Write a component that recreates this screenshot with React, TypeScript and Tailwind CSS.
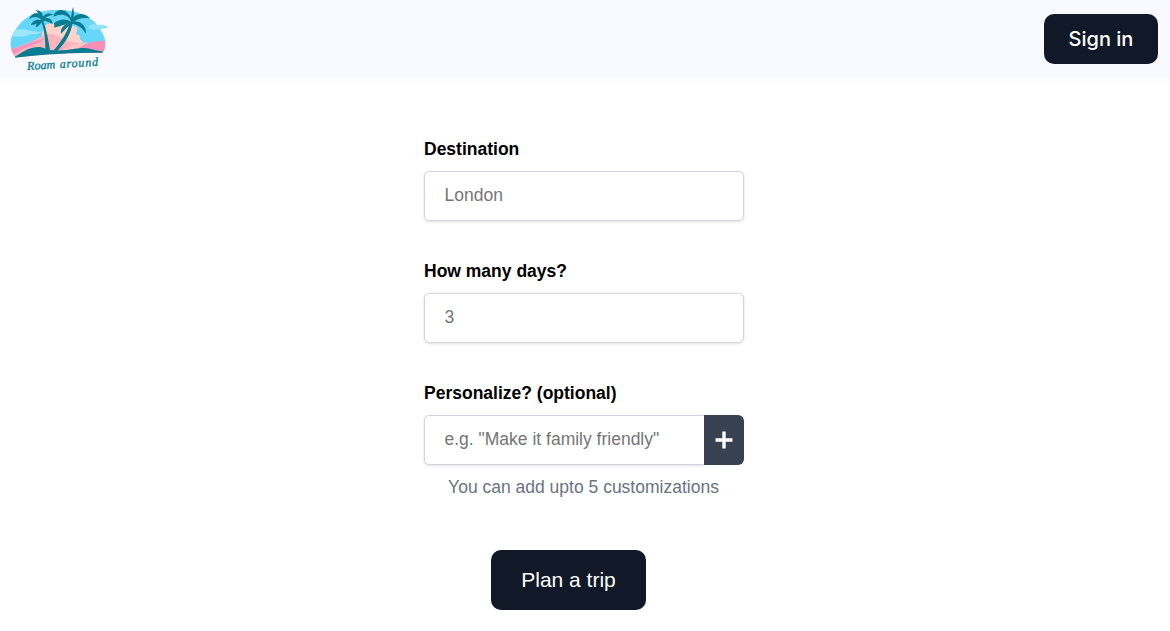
import React from "react";

function Logo() {
  return (
    <svg viewBox="0 0 360 240" className="h-20 w-[120px]" role="img" aria-label="Roam around">
      <defs>
        <clipPath id="island">
          <path d="M46 173 C38 160 31 146 31 133 C32 112 38 99 53 80 C78 44 122 29 173 29 C228 29 282 48 305 95 C313 107 317 121 316 134 C315 144 312 153 307 158 C215 158 128 162 46 173Z" />
        </clipPath>
      </defs>
      <g clipPath="url(#island)">
        <rect x="25" y="20" width="300" height="160" fill="#68d5fa" />
        <path d="M28 98 C45 84 62 91 76 88 C91 97 108 91 124 98 C105 104 91 101 78 107 C62 113 48 107 28 112Z" fill="#9ee6fb" />
        <path d="M126 110 C124 93 135 84 134 75 L160 68 L229 80 C237 90 226 96 230 104 C238 104 243 108 239 118 L250 126 L200 160 L110 160Z" fill="#fdd3ca" />
        <path d="M34 148 C65 136 104 124 130 105 C160 96 170 108 190 116 C211 128 230 126 248 133 L248 166 L42 173Z" fill="#fdb4bc" />
        <path d="M33 148 C72 139 99 121 134 117 C119 128 103 132 86 140 C69 144 53 156 40 165Z" fill="#fa8fba" />
        <path d="M179 147 C210 128 249 140 270 128 C287 121 304 127 318 121 L318 162 L165 162Z" fill="#fa8fb6" />
        <path d="M176 153 C210 132 242 131 267 126 L235 145Z" fill="#fdc5c3" />
        <path d="M44 171 C74 151 92 140 121 141 C137 145 146 152 164 151 C201 153 225 144 252 144 C272 145 290 153 311 155 L309 161 C216 158 120 164 45 175Z" fill="#087d91" />
      </g>
      <path d="M267 78 C278 69 287 74 293 75 C307 70 315 77 325 80 C318 88 306 85 297 88 C286 91 276 89 264 84Z" fill="#91e2fa" />
      <g fill="#087d91">
        <path d="M123 59 C132 86 137 116 136 157 L151 157 C146 124 140 88 128 57Z" />
        <path d="M211 65 C203 96 181 129 156 157 L168 157 C194 131 214 102 218 65Z" />
        <path d="M124 60 C114 48 99 48 88 58 C92 41 109 34 120 45 L128 57Z" />
        <path d="M125 57 C121 44 113 39 108 31 C122 29 131 42 129 57Z" />
        <path d="M126 58 C130 42 146 36 160 44 C147 46 138 51 128 60Z" />
        <path d="M126 58 C144 48 158 57 158 73 C148 66 139 62 128 62Z" />
        <path d="M125 61 C110 56 97 63 93 75 C106 74 117 69 126 63Z" />
        <path d="M124 61 C112 65 106 72 108 82 C119 77 125 69 128 61Z" />
        <path d="M213 65 C207 44 184 38 160 50 C163 31 186 22 202 38 C212 47 217 57 217 65Z" />
        <path d="M213 66 C213 49 215 35 219 22 C224 37 222 53 217 66Z" />
        <path d="M214 65 C221 40 249 34 270 55 C246 51 232 56 217 68Z" />
        <path d="M215 65 C236 60 260 74 258 101 C247 83 234 74 216 71Z" />
        <path d="M213 65 C197 55 180 57 162 69 C163 76 164 79 161 83 C183 79 197 71 214 69Z" />
        <path d="M212 67 C193 73 180 84 183 102 C195 87 205 80 217 69Z" />
      </g>
      <g
        transform="rotate(-3.5 82 209)"
        className="fill-[#087d91] stroke-[#087d91] stroke-1 font-['Liberation_Serif',serif] text-[36px] italic"
      >
        <text x="82" y="210" textLength="84" lengthAdjust="spacingAndGlyphs">Roam</text>
        <text x="180" y="210" textLength="115" lengthAdjust="spacing">around</text>
      </g>
    </svg>
  );
}

const inputClass =
  "block h-[50px] w-full rounded-[5px] border border-[#d1d5db] bg-white pr-5 pl-[19.5px] pb-0.5 text-[17.5px] text-gray-900 shadow-[0_1px_3px_rgba(0,0,0,0.12)] placeholder:text-[#757575] placeholder:opacity-100 focus:outline-none";

function Field({ id, label, placeholder, children }: {
  id: string;
  label: string;
  placeholder: string;
  children?: React.ReactNode;
}) {
  return (
    <div>
      <label htmlFor={id} className="mb-[9px] block text-[17.5px] leading-[25px] font-bold text-black">
        {label}
      </label>
      <div className="flex">
        <input id={id} placeholder={placeholder} className={children ? inputClass + " rounded-r-none border-r-0" : inputClass} />
        {children}
      </div>
    </div>
  );
}

export default function App() {
  return (
    <div className="h-[631px] overflow-hidden bg-white font-['Liberation_Sans',Arial,sans-serif]">
      <header className="flex h-[81px] items-start justify-between bg-linear-to-b from-[#f9faff] from-95% to-[#fdfdff] pr-3">
        <Logo />
        <button className="mt-3.5 h-[50px] w-[114px] rounded-[10px] bg-[#111827] pb-px font-['Inter',sans-serif] text-[20px] font-medium text-white">
          Sign in
        </button>
      </header>
      <main className="ml-[424px] w-80 pt-14">
        <form className="flex flex-col gap-[38px]" onSubmit={(e) => e.preventDefault()}>
          <Field id="destination" label="Destination" placeholder="London" />
          <Field id="days" label="How many days?" placeholder="3" />
          <Field id="personalize" label="Personalize? (optional)" placeholder={'e.g. "Make it family friendly"'}>
            <button
              type="button"
              aria-label="Add customization"
              className="flex h-[50px] w-10 shrink-0 items-center justify-center rounded-r-[6px] bg-[#374151]"
            >
              <svg viewBox="0 0 18 18" className="size-[18px]" fill="none" stroke="#fff" strokeWidth="3.4">
                <path d="M9 0.5V17.5M0.5 9H17.5" />
              </svg>
            </button>
          </Field>
        </form>
        <p className="mt-2.5 -ml-px text-center text-[17.5px] leading-[25px] text-[#6b7280]">You can add upto 5 customizations</p>
        <button className="mt-[50px] ml-[67px] block h-[60px] w-[155px] rounded-[10px] bg-[#111827] text-[21px] text-white">
          Plan a trip
        </button>
      </main>
    </div>
  );
}
